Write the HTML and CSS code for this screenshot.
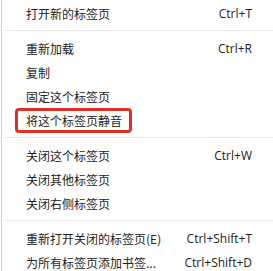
FILE: index.html
```html
<!DOCTYPE html>
<html lang="zh-CN">
<head>
    <meta charset="UTF-8">
    <title>标签页菜单</title>
    <link rel="stylesheet" href="styles.css">
</head>
<body>
    <div class="menu">
        <div class="item"><span>打开新的标签页</span><span class="key">Ctrl+T</span></div>
        <div class="sep"></div>
        <div class="item"><span>重新加载</span><span class="key">Ctrl+R</span></div>
        <div class="item"><span>复制</span></div>
        <div class="item"><span>固定这个标签页</span></div>
        <div class="item"><span>将这个标签页静音</span></div>
        <div class="sep"></div>
        <div class="item"><span>关闭这个标签页</span><span class="key">Ctrl+W</span></div>
        <div class="item"><span>关闭其他标签页</span></div>
        <div class="item"><span>关闭右侧标签页</span></div>
        <div class="sep"></div>
        <div class="item"><span>重新打开关闭的标签页(E)</span><span class="key">Ctrl+Shift+T</span></div>
        <div class="item"><span>为所有标签页添加书签...</span><span class="key">Ctrl+Shift+D</span></div>

        <!-- annotation box around the mute item -->
        <div class="mark"></div>
    </div>
</body>
</html>
```

FILE: styles.css
```css
body {
    margin: 0;
    background-color: #fff;
    overflow: hidden;
    font-family: "Noto Sans CJK SC", "Noto Sans", sans-serif;
    font-size: 12px;
    color: #222;
}
.menu {
    position: relative;
    margin-left: 1px;
    padding-top: 2px;
    border-left: 1px solid #d0d0d0;
}
.item {
    display: flex;
    justify-content: space-between;
    height: 24px;
    line-height: 24px;
    padding-left: 24px;
    padding-right: 21px;
}
.key {
    font-family: "Open Sans", "Noto Sans", sans-serif;
}
.sep {
    height: 1px;
    margin: 4px 0 6px 3px;
    background-color: #e6e6e6;
}
.mark {
    position: absolute;
    left: 13px;
    top: 108px;
    width: 111px;
    height: 19px;
    border: 3px solid #dc3028;
    border-radius: 4px;
}
```
